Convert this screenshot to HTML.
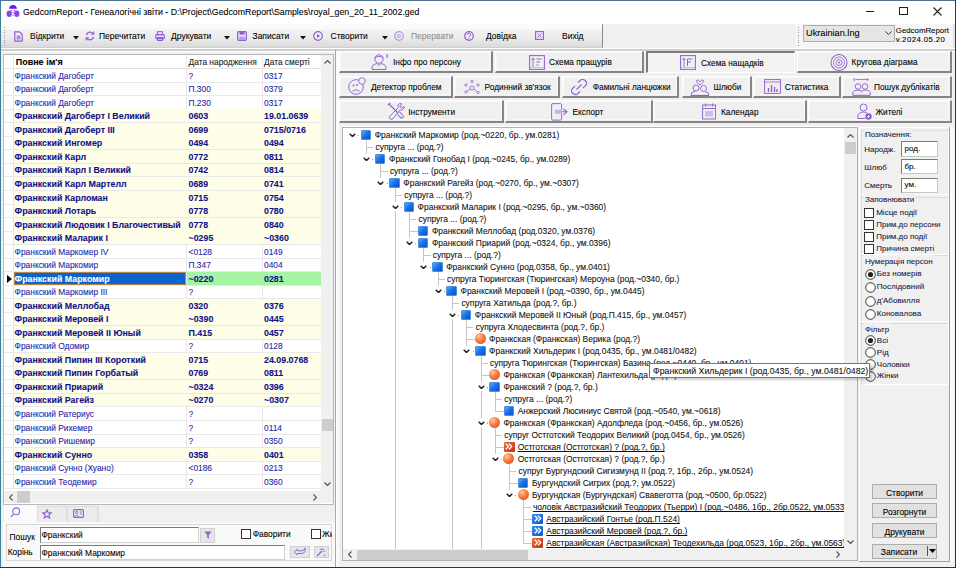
<!DOCTYPE html><html><head><meta charset="utf-8"><style>
html,body{margin:0;padding:0;} body div{-webkit-text-stroke:0.08px currentColor;} body{width:956px;height:568px;position:relative;overflow:hidden;background:#f0f0f0;font-family:"Liberation Sans", sans-serif;} div{box-sizing:border-box;}
</style></head><body>
<div style="position:absolute;left:0px;top:0px;width:956px;height:24px;background:#fff"></div>
<svg style="position:absolute;left:6px;top:5px" width="14" height="13" viewBox="0 0 14 13"><path d="M3 3.8 Q3.5 0 7 0 Q10.5 0 11 3.8 Z" fill="#6a14ee"/><ellipse cx="3.2" cy="8.8" rx="2.6" ry="3.3" fill="#8a44ec"/><ellipse cx="10.8" cy="8.8" rx="2.6" ry="3.3" fill="#8a44ec"/><path d="M4.6 5 L6.4 5 L5.5 6.6 Z M7.6 5 L9.4 5 L8.5 6.6 Z M6.2 7.3 L7.8 7.3 L7 9 Z M6.3 9.8 L7.7 9.8 L7 11.2 Z" fill="#7a30ee"/></svg>
<div style="position:absolute;left:23px;top:4.50px;height:14px;line-height:14px;font-size:8.8px;color:#000;font-weight:400;white-space:nowrap;">GedcomReport - Генеалогічні звіти - D:\Project\GedcomReport\Samples\royal_gen_20_11_2002.ged</div>
<div style="position:absolute;left:866px;top:11px;width:8px;height:1px;background:#222"></div>
<div style="position:absolute;left:899px;top:7px;width:8.5px;height:8px;border:1px solid #222"></div>
<svg style="position:absolute;left:933px;top:7px" width="9" height="9" viewBox="0 0 9 9"><path d="M0.5 0.5 L8.5 8.5 M8.5 0.5 L0.5 8.5" stroke="#222" stroke-width="1.1"/></svg>
<div style="position:absolute;left:1px;top:24px;width:602px;height:24px;background:linear-gradient(#fbfbfb 0px,#fbfbfb 5px,#f1f1f1 6px,#ededed 13px,#dadada 23px);border-right:1px solid #8c8c8c;border-bottom:1px solid #d0d0d0"></div>
<div style="position:absolute;left:4px;top:27.0px;width:1px;height:1px;background:#9a9a9a"></div>
<div style="position:absolute;left:4px;top:29.5px;width:1px;height:1px;background:#9a9a9a"></div>
<div style="position:absolute;left:4px;top:32.0px;width:1px;height:1px;background:#9a9a9a"></div>
<div style="position:absolute;left:4px;top:34.5px;width:1px;height:1px;background:#9a9a9a"></div>
<div style="position:absolute;left:4px;top:37.0px;width:1px;height:1px;background:#9a9a9a"></div>
<div style="position:absolute;left:4px;top:39.5px;width:1px;height:1px;background:#9a9a9a"></div>
<div style="position:absolute;left:4px;top:42.0px;width:1px;height:1px;background:#9a9a9a"></div>
<div style="position:absolute;left:4px;top:44.5px;width:1px;height:1px;background:#9a9a9a"></div>
<div style="position:absolute;left:603px;top:24px;width:192px;height:24px;background:#f0f0f0"></div>
<div style="position:absolute;left:795px;top:23.5px;width:159px;height:25px;background:#f6f6f6;border-bottom:1px solid #cdcdcd;border-right:1px solid #e0e0e0"></div>
<div style="position:absolute;left:798px;top:27.0px;width:1px;height:1px;background:#9a9a9a"></div>
<div style="position:absolute;left:798px;top:29.5px;width:1px;height:1px;background:#9a9a9a"></div>
<div style="position:absolute;left:798px;top:32.0px;width:1px;height:1px;background:#9a9a9a"></div>
<div style="position:absolute;left:798px;top:34.5px;width:1px;height:1px;background:#9a9a9a"></div>
<div style="position:absolute;left:798px;top:37.0px;width:1px;height:1px;background:#9a9a9a"></div>
<div style="position:absolute;left:798px;top:39.5px;width:1px;height:1px;background:#9a9a9a"></div>
<div style="position:absolute;left:798px;top:42.0px;width:1px;height:1px;background:#9a9a9a"></div>
<div style="position:absolute;left:798px;top:44.5px;width:1px;height:1px;background:#9a9a9a"></div>
<div style="position:absolute;left:1px;top:48px;width:954px;height:1px;background:#fff"></div>
<div style="position:absolute;left:1px;top:49px;width:954px;height:1.5px;background:#cfcfcf"></div>
<div style="position:absolute;left:1px;top:50.5px;width:954px;height:1px;background:#fff"></div>
<svg style="position:absolute;left:14px;top:31px" width="9" height="11" viewBox="0 0 9 11"><path d="M0.8 0.8 H5.5 L8.2 3.5 V10.2 H0.8 Z" fill="none" stroke="#8f5fd3" stroke-width="1.2"/><rect x="2.6" y="4.5" width="3.8" height="4" fill="#a58ad8"/></svg>
<div style="position:absolute;left:30px;top:29.00px;height:14px;line-height:14px;font-size:8.5px;color:#000;font-weight:400;white-space:nowrap;">Відкрити</div>
<svg style="position:absolute;left:73px;top:36px" width="6" height="4" viewBox="0 0 6 4"><path d="M0 0 H6 L3 3.5 Z" fill="#111"/></svg>
<svg style="position:absolute;left:85px;top:31px" width="10" height="10" viewBox="0 0 10 10"><path d="M1.5 4 A3.8 3.8 0 0 1 8.2 2.6 M8.5 6 A3.8 3.8 0 0 1 1.8 7.4" fill="none" stroke="#8f5fd3" stroke-width="1.3"/><path d="M8.8 0.5 V3.2 H6.1" fill="none" stroke="#8f5fd3" stroke-width="1.1"/><path d="M1.2 9.5 V6.8 H3.9" fill="none" stroke="#8f5fd3" stroke-width="1.1"/></svg>
<div style="position:absolute;left:99px;top:29.00px;height:14px;line-height:14px;font-size:8.5px;color:#000;font-weight:400;white-space:nowrap;">Перечитати</div>
<svg style="position:absolute;left:155px;top:31px" width="10" height="10" viewBox="0 0 10 10"><rect x="2.5" y="0.7" width="5" height="3" fill="none" stroke="#8f5fd3" stroke-width="1.1"/><rect x="0.7" y="3.7" width="8.6" height="4" rx="1" fill="none" stroke="#8f5fd3" stroke-width="1.2"/><rect x="2.5" y="6.5" width="5" height="3" fill="none" stroke="#8f5fd3" stroke-width="1.1"/></svg>
<div style="position:absolute;left:171px;top:29.00px;height:14px;line-height:14px;font-size:8.5px;color:#000;font-weight:400;white-space:nowrap;">Друкувати</div>
<svg style="position:absolute;left:224px;top:36px" width="6" height="4" viewBox="0 0 6 4"><path d="M0 0 H6 L3 3.5 Z" fill="#111"/></svg>
<svg style="position:absolute;left:237px;top:31px" width="10" height="10" viewBox="0 0 10 10"><rect x="0.7" y="0.7" width="8.6" height="8.6" rx="1" fill="none" stroke="#8f5fd3" stroke-width="1.3"/><rect x="2.5" y="0.7" width="5" height="3" fill="#8f5fd3"/><rect x="2.3" y="5.5" width="5.4" height="3.5" fill="#b89ae6"/></svg>
<div style="position:absolute;left:252.5px;top:29.00px;height:14px;line-height:14px;font-size:8.5px;color:#000;font-weight:400;white-space:nowrap;">Записати</div>
<svg style="position:absolute;left:300px;top:36px" width="6" height="4" viewBox="0 0 6 4"><path d="M0 0 H6 L3 3.5 Z" fill="#111"/></svg>
<svg style="position:absolute;left:313px;top:31px" width="10" height="10" viewBox="0 0 10 10"><circle cx="5" cy="5" r="4.3" fill="none" stroke="#8f5fd3" stroke-width="1.2"/><path d="M4 3 L7 5 L4 7 Z" fill="#8f5fd3"/></svg>
<div style="position:absolute;left:330.5px;top:29.00px;height:14px;line-height:14px;font-size:8.5px;color:#000;font-weight:400;white-space:nowrap;">Створити</div>
<svg style="position:absolute;left:382px;top:36px" width="6" height="4" viewBox="0 0 6 4"><path d="M0 0 H6 L3 3.5 Z" fill="#111"/></svg>
<svg style="position:absolute;left:394px;top:31px" width="10" height="10" viewBox="0 0 10 10"><circle cx="5" cy="5" r="4.3" fill="none" stroke="#b49ae0" stroke-width="1.2"/><path d="M4 3 V7 M6 3 V7" stroke="#b49ae0" stroke-width="1.1"/></svg>
<div style="position:absolute;left:411px;top:29.00px;height:14px;line-height:14px;font-size:8.5px;color:#8d8d8d;font-weight:400;white-space:nowrap;">Перервати</div>
<svg style="position:absolute;left:464px;top:31px" width="10" height="10" viewBox="0 0 10 10"><circle cx="5" cy="5" r="4.3" fill="none" stroke="#8f5fd3" stroke-width="1.2"/><path d="M3.5 3.8 A1.6 1.6 0 1 1 5.6 5.3 L5 6.2" fill="none" stroke="#8f5fd3" stroke-width="1"/><circle cx="5" cy="7.6" r="0.6" fill="#8f5fd3"/></svg>
<div style="position:absolute;left:486px;top:29.00px;height:14px;line-height:14px;font-size:8.5px;color:#000;font-weight:400;white-space:nowrap;">Довідка</div>
<svg style="position:absolute;left:535px;top:31px" width="9" height="9" viewBox="0 0 9 9"><rect x="0.6" y="0.6" width="7.8" height="7.8" fill="none" stroke="#8f5fd3" stroke-width="1.1"/><path d="M2.5 2.5 L6.5 6.5 M6.5 2.5 L2.5 6.5" stroke="#8f5fd3" stroke-width="1"/></svg>
<div style="position:absolute;left:562px;top:29.00px;height:14px;line-height:14px;font-size:8.5px;color:#000;font-weight:400;white-space:nowrap;">Вихід</div>
<div style="position:absolute;left:803px;top:24.5px;width:92px;height:17px;background:#e5e5e5;border:1px solid #adadad"></div>
<div style="position:absolute;left:806px;top:26.00px;height:14px;line-height:14px;font-size:9.2px;color:#000;font-weight:400;white-space:nowrap;">Ukrainian.lng</div>
<svg style="position:absolute;left:885px;top:31px" width="7" height="4" viewBox="0 0 7 4"><path d="M0.5 0.5 L3.5 3.5 L6.5 0.5" fill="none" stroke="#333" stroke-width="1"/></svg>
<div style="position:absolute;left:895.8px;top:26.8px;width:60px;font-size:7.85px;line-height:8.8px;color:#000;white-space:nowrap">GedcomReport<br><span style="letter-spacing:0.4px">v.2024.05.20</span></div>
<div style="position:absolute;left:1px;top:51px;width:334px;height:1px;background:#fff"></div>
<div style="position:absolute;left:335px;top:50px;width:1px;height:518px;background:#a9a9a9"></div>
<div style="position:absolute;left:3px;top:54px;width:331px;height:451px;border:1px solid #b9b9b9;background:#fff"></div>
<div style="position:absolute;left:4px;top:55px;width:317px;height:13.8px;background:#fff;border-bottom:1px solid #e2e2e2"></div>
<div style="position:absolute;left:13px;top:55px;width:1px;height:432.5px;background:#e6e6e6"></div>
<div style="position:absolute;left:186px;top:55px;width:1px;height:432.5px;background:#e8e8e8"></div>
<div style="position:absolute;left:262px;top:55px;width:1px;height:432.5px;background:#e8e8e8"></div>
<div style="position:absolute;left:15.7px;top:55.00px;height:14px;line-height:14px;font-size:9px;color:#000;font-weight:700;white-space:nowrap;">Повне ім&#x27;я</div>
<div style="position:absolute;left:188.5px;top:55.00px;height:14px;line-height:14px;font-size:8.4px;color:#222;font-weight:400;white-space:nowrap;">Дата народження</div>
<div style="position:absolute;left:264px;top:55.00px;height:14px;line-height:14px;font-size:8.4px;color:#222;font-weight:400;white-space:nowrap;">Дата смерті</div>
<div style="position:absolute;left:4px;top:81.73px;width:317px;height:1px;background:#e9e9e9"></div>
<div style="position:absolute;left:14.6px;top:68.77px;height:14px;line-height:14px;font-size:8.4px;color:#1e1ea6;font-weight:400;white-space:nowrap;">Франкский Дагоберт</div>
<div style="position:absolute;left:188.5px;top:68.77px;height:14px;line-height:14px;font-size:8.4px;color:#1e1ea6;font-weight:400;white-space:nowrap;">?</div>
<div style="position:absolute;left:264px;top:68.77px;height:14px;line-height:14px;font-size:8.4px;color:#1e1ea6;font-weight:400;white-space:nowrap;">0317</div>
<div style="position:absolute;left:4px;top:95.26px;width:317px;height:1px;background:#e9e9e9"></div>
<div style="position:absolute;left:14.6px;top:82.30px;height:14px;line-height:14px;font-size:8.4px;color:#1e1ea6;font-weight:400;white-space:nowrap;">Франкский Дагоберт</div>
<div style="position:absolute;left:188.5px;top:82.30px;height:14px;line-height:14px;font-size:8.4px;color:#1e1ea6;font-weight:400;white-space:nowrap;">П.300</div>
<div style="position:absolute;left:264px;top:82.30px;height:14px;line-height:14px;font-size:8.4px;color:#1e1ea6;font-weight:400;white-space:nowrap;">0379</div>
<div style="position:absolute;left:4px;top:108.79px;width:317px;height:1px;background:#e9e9e9"></div>
<div style="position:absolute;left:14.6px;top:95.83px;height:14px;line-height:14px;font-size:8.4px;color:#1e1ea6;font-weight:400;white-space:nowrap;">Франкский Дагоберт</div>
<div style="position:absolute;left:188.5px;top:95.83px;height:14px;line-height:14px;font-size:8.4px;color:#1e1ea6;font-weight:400;white-space:nowrap;">П.230</div>
<div style="position:absolute;left:264px;top:95.83px;height:14px;line-height:14px;font-size:8.4px;color:#1e1ea6;font-weight:400;white-space:nowrap;">0317</div>
<div style="position:absolute;left:14px;top:109.38999999999999px;width:307px;height:13.53px;background:#fdfde8"></div>
<div style="position:absolute;left:4px;top:122.32px;width:317px;height:1px;background:#e9e9e9"></div>
<div style="position:absolute;left:14.6px;top:109.35px;height:14px;line-height:14px;font-size:8.85px;color:#10108a;font-weight:700;white-space:nowrap;">Франкский Дагоберт I Великий</div>
<div style="position:absolute;left:188.5px;top:109.35px;height:14px;line-height:14px;font-size:8.85px;color:#10108a;font-weight:700;white-space:nowrap;">0603</div>
<div style="position:absolute;left:264px;top:109.35px;height:14px;line-height:14px;font-size:8.85px;color:#10108a;font-weight:700;white-space:nowrap;">19.01.0639</div>
<div style="position:absolute;left:14px;top:122.91999999999999px;width:307px;height:13.53px;background:#fdfde8"></div>
<div style="position:absolute;left:4px;top:135.85px;width:317px;height:1px;background:#e9e9e9"></div>
<div style="position:absolute;left:14.6px;top:122.88px;height:14px;line-height:14px;font-size:8.85px;color:#10108a;font-weight:700;white-space:nowrap;">Франкский Дагоберт III</div>
<div style="position:absolute;left:188.5px;top:122.88px;height:14px;line-height:14px;font-size:8.85px;color:#10108a;font-weight:700;white-space:nowrap;">0699</div>
<div style="position:absolute;left:264px;top:122.88px;height:14px;line-height:14px;font-size:8.85px;color:#10108a;font-weight:700;white-space:nowrap;">0715/0716</div>
<div style="position:absolute;left:14px;top:136.45px;width:307px;height:13.53px;background:#fdfde8"></div>
<div style="position:absolute;left:4px;top:149.38px;width:317px;height:1px;background:#e9e9e9"></div>
<div style="position:absolute;left:14.6px;top:136.41px;height:14px;line-height:14px;font-size:8.85px;color:#10108a;font-weight:700;white-space:nowrap;">Франкский Ингомер</div>
<div style="position:absolute;left:188.5px;top:136.41px;height:14px;line-height:14px;font-size:8.85px;color:#10108a;font-weight:700;white-space:nowrap;">0494</div>
<div style="position:absolute;left:264px;top:136.41px;height:14px;line-height:14px;font-size:8.85px;color:#10108a;font-weight:700;white-space:nowrap;">0494</div>
<div style="position:absolute;left:14px;top:149.98px;width:307px;height:13.53px;background:#fdfde8"></div>
<div style="position:absolute;left:4px;top:162.91px;width:317px;height:1px;background:#e9e9e9"></div>
<div style="position:absolute;left:14.6px;top:149.94px;height:14px;line-height:14px;font-size:8.85px;color:#10108a;font-weight:700;white-space:nowrap;">Франкский Карл</div>
<div style="position:absolute;left:188.5px;top:149.94px;height:14px;line-height:14px;font-size:8.85px;color:#10108a;font-weight:700;white-space:nowrap;">0772</div>
<div style="position:absolute;left:264px;top:149.94px;height:14px;line-height:14px;font-size:8.85px;color:#10108a;font-weight:700;white-space:nowrap;">0811</div>
<div style="position:absolute;left:14px;top:163.51px;width:307px;height:13.53px;background:#fdfde8"></div>
<div style="position:absolute;left:4px;top:176.44px;width:317px;height:1px;background:#e9e9e9"></div>
<div style="position:absolute;left:14.6px;top:163.47px;height:14px;line-height:14px;font-size:8.85px;color:#10108a;font-weight:700;white-space:nowrap;">Франкский Карл I Великий</div>
<div style="position:absolute;left:188.5px;top:163.47px;height:14px;line-height:14px;font-size:8.85px;color:#10108a;font-weight:700;white-space:nowrap;">0742</div>
<div style="position:absolute;left:264px;top:163.47px;height:14px;line-height:14px;font-size:8.85px;color:#10108a;font-weight:700;white-space:nowrap;">0814</div>
<div style="position:absolute;left:14px;top:177.04px;width:307px;height:13.53px;background:#fdfde8"></div>
<div style="position:absolute;left:4px;top:189.97px;width:317px;height:1px;background:#e9e9e9"></div>
<div style="position:absolute;left:14.6px;top:177.00px;height:14px;line-height:14px;font-size:8.85px;color:#10108a;font-weight:700;white-space:nowrap;">Франкский Карл Мартелл</div>
<div style="position:absolute;left:188.5px;top:177.00px;height:14px;line-height:14px;font-size:8.85px;color:#10108a;font-weight:700;white-space:nowrap;">0689</div>
<div style="position:absolute;left:264px;top:177.00px;height:14px;line-height:14px;font-size:8.85px;color:#10108a;font-weight:700;white-space:nowrap;">0741</div>
<div style="position:absolute;left:14px;top:190.57px;width:307px;height:13.53px;background:#fdfde8"></div>
<div style="position:absolute;left:4px;top:203.5px;width:317px;height:1px;background:#e9e9e9"></div>
<div style="position:absolute;left:14.6px;top:190.53px;height:14px;line-height:14px;font-size:8.85px;color:#10108a;font-weight:700;white-space:nowrap;">Франкский Карломан</div>
<div style="position:absolute;left:188.5px;top:190.53px;height:14px;line-height:14px;font-size:8.85px;color:#10108a;font-weight:700;white-space:nowrap;">0715</div>
<div style="position:absolute;left:264px;top:190.53px;height:14px;line-height:14px;font-size:8.85px;color:#10108a;font-weight:700;white-space:nowrap;">0754</div>
<div style="position:absolute;left:14px;top:204.09999999999997px;width:307px;height:13.53px;background:#fdfde8"></div>
<div style="position:absolute;left:4px;top:217.02999999999997px;width:317px;height:1px;background:#e9e9e9"></div>
<div style="position:absolute;left:14.6px;top:204.06px;height:14px;line-height:14px;font-size:8.85px;color:#10108a;font-weight:700;white-space:nowrap;">Франкский Лотарь</div>
<div style="position:absolute;left:188.5px;top:204.06px;height:14px;line-height:14px;font-size:8.85px;color:#10108a;font-weight:700;white-space:nowrap;">0778</div>
<div style="position:absolute;left:264px;top:204.06px;height:14px;line-height:14px;font-size:8.85px;color:#10108a;font-weight:700;white-space:nowrap;">0780</div>
<div style="position:absolute;left:14px;top:217.63px;width:307px;height:13.53px;background:#fdfde8"></div>
<div style="position:absolute;left:4px;top:230.56px;width:317px;height:1px;background:#e9e9e9"></div>
<div style="position:absolute;left:14.6px;top:217.59px;height:14px;line-height:14px;font-size:8.85px;color:#10108a;font-weight:700;white-space:nowrap;">Франкский Людовик I Благочестивый</div>
<div style="position:absolute;left:188.5px;top:217.59px;height:14px;line-height:14px;font-size:8.85px;color:#10108a;font-weight:700;white-space:nowrap;">0778</div>
<div style="position:absolute;left:264px;top:217.59px;height:14px;line-height:14px;font-size:8.85px;color:#10108a;font-weight:700;white-space:nowrap;">0840</div>
<div style="position:absolute;left:14px;top:231.15999999999997px;width:307px;height:13.53px;background:#fdfde8"></div>
<div style="position:absolute;left:4px;top:244.08999999999997px;width:317px;height:1px;background:#e9e9e9"></div>
<div style="position:absolute;left:14.6px;top:231.12px;height:14px;line-height:14px;font-size:8.85px;color:#10108a;font-weight:700;white-space:nowrap;">Франкский Маларик I</div>
<div style="position:absolute;left:188.5px;top:231.12px;height:14px;line-height:14px;font-size:8.85px;color:#10108a;font-weight:700;white-space:nowrap;">~0295</div>
<div style="position:absolute;left:264px;top:231.12px;height:14px;line-height:14px;font-size:8.85px;color:#10108a;font-weight:700;white-space:nowrap;">~0360</div>
<div style="position:absolute;left:4px;top:257.61999999999995px;width:317px;height:1px;background:#e9e9e9"></div>
<div style="position:absolute;left:14.6px;top:244.65px;height:14px;line-height:14px;font-size:8.4px;color:#1e1ea6;font-weight:400;white-space:nowrap;">Франкский Маркомер IV</div>
<div style="position:absolute;left:188.5px;top:244.65px;height:14px;line-height:14px;font-size:8.4px;color:#1e1ea6;font-weight:400;white-space:nowrap;">&lt;0128</div>
<div style="position:absolute;left:264px;top:244.65px;height:14px;line-height:14px;font-size:8.4px;color:#1e1ea6;font-weight:400;white-space:nowrap;">0149</div>
<div style="position:absolute;left:4px;top:271.1499999999999px;width:317px;height:1px;background:#e9e9e9"></div>
<div style="position:absolute;left:14.6px;top:258.18px;height:14px;line-height:14px;font-size:8.4px;color:#1e1ea6;font-weight:400;white-space:nowrap;">Франкский Маркомир</div>
<div style="position:absolute;left:188.5px;top:258.18px;height:14px;line-height:14px;font-size:8.4px;color:#1e1ea6;font-weight:400;white-space:nowrap;">П.347</div>
<div style="position:absolute;left:264px;top:258.18px;height:14px;line-height:14px;font-size:8.4px;color:#1e1ea6;font-weight:400;white-space:nowrap;">0404</div>
<div style="position:absolute;left:14px;top:272.25px;width:172px;height:13.03px;background:#0a64cf;border:1px solid #b08850"></div>
<div style="position:absolute;left:187px;top:272.25px;width:134px;height:13.03px;background:#a4f4a4"></div>
<svg style="position:absolute;left:7px;top:275.25px" width="5" height="8" viewBox="0 0 5 8"><path d="M0 0 L5 4 L0 8 Z" fill="#000"/></svg>
<div style="position:absolute;left:4px;top:284.67999999999995px;width:317px;height:1px;background:#e9e9e9"></div>
<div style="position:absolute;left:14.6px;top:271.71px;height:14px;line-height:14px;font-size:8.85px;color:#fff;font-weight:700;white-space:nowrap;">Франкский Маркомир</div>
<div style="position:absolute;left:188.5px;top:271.71px;height:14px;line-height:14px;font-size:8.85px;color:#10108a;font-weight:700;white-space:nowrap;">~0220</div>
<div style="position:absolute;left:264px;top:271.71px;height:14px;line-height:14px;font-size:8.85px;color:#10108a;font-weight:700;white-space:nowrap;">0281</div>
<div style="position:absolute;left:4px;top:298.2099999999999px;width:317px;height:1px;background:#e9e9e9"></div>
<div style="position:absolute;left:14.6px;top:285.24px;height:14px;line-height:14px;font-size:8.4px;color:#1e1ea6;font-weight:400;white-space:nowrap;">Франкский Маркомир III</div>
<div style="position:absolute;left:188.5px;top:285.24px;height:14px;line-height:14px;font-size:8.4px;color:#1e1ea6;font-weight:400;white-space:nowrap;">?</div>
<div style="position:absolute;left:264px;top:285.24px;height:14px;line-height:14px;font-size:8.4px;color:#1e1ea6;font-weight:400;white-space:nowrap;"></div>
<div style="position:absolute;left:14px;top:298.81px;width:307px;height:13.53px;background:#fdfde8"></div>
<div style="position:absolute;left:4px;top:311.73999999999995px;width:317px;height:1px;background:#e9e9e9"></div>
<div style="position:absolute;left:14.6px;top:298.77px;height:14px;line-height:14px;font-size:8.85px;color:#10108a;font-weight:700;white-space:nowrap;">Франкский Меллобад</div>
<div style="position:absolute;left:188.5px;top:298.77px;height:14px;line-height:14px;font-size:8.85px;color:#10108a;font-weight:700;white-space:nowrap;">0320</div>
<div style="position:absolute;left:264px;top:298.77px;height:14px;line-height:14px;font-size:8.85px;color:#10108a;font-weight:700;white-space:nowrap;">0376</div>
<div style="position:absolute;left:14px;top:312.34px;width:307px;height:13.53px;background:#fdfde8"></div>
<div style="position:absolute;left:4px;top:325.2699999999999px;width:317px;height:1px;background:#e9e9e9"></div>
<div style="position:absolute;left:14.6px;top:312.30px;height:14px;line-height:14px;font-size:8.85px;color:#10108a;font-weight:700;white-space:nowrap;">Франкский Меровей I</div>
<div style="position:absolute;left:188.5px;top:312.30px;height:14px;line-height:14px;font-size:8.85px;color:#10108a;font-weight:700;white-space:nowrap;">~0390</div>
<div style="position:absolute;left:264px;top:312.30px;height:14px;line-height:14px;font-size:8.85px;color:#10108a;font-weight:700;white-space:nowrap;">0445</div>
<div style="position:absolute;left:14px;top:325.87px;width:307px;height:13.53px;background:#fdfde8"></div>
<div style="position:absolute;left:4px;top:338.79999999999995px;width:317px;height:1px;background:#e9e9e9"></div>
<div style="position:absolute;left:14.6px;top:325.83px;height:14px;line-height:14px;font-size:8.85px;color:#10108a;font-weight:700;white-space:nowrap;">Франкский Меровей II Юный</div>
<div style="position:absolute;left:188.5px;top:325.83px;height:14px;line-height:14px;font-size:8.85px;color:#10108a;font-weight:700;white-space:nowrap;">П.415</div>
<div style="position:absolute;left:264px;top:325.83px;height:14px;line-height:14px;font-size:8.85px;color:#10108a;font-weight:700;white-space:nowrap;">0457</div>
<div style="position:absolute;left:4px;top:352.3299999999999px;width:317px;height:1px;background:#e9e9e9"></div>
<div style="position:absolute;left:14.6px;top:339.36px;height:14px;line-height:14px;font-size:8.4px;color:#1e1ea6;font-weight:400;white-space:nowrap;">Франкский Одомир</div>
<div style="position:absolute;left:188.5px;top:339.36px;height:14px;line-height:14px;font-size:8.4px;color:#1e1ea6;font-weight:400;white-space:nowrap;">?</div>
<div style="position:absolute;left:264px;top:339.36px;height:14px;line-height:14px;font-size:8.4px;color:#1e1ea6;font-weight:400;white-space:nowrap;">0128</div>
<div style="position:absolute;left:14px;top:352.93px;width:307px;height:13.53px;background:#fdfde8"></div>
<div style="position:absolute;left:4px;top:365.85999999999996px;width:317px;height:1px;background:#e9e9e9"></div>
<div style="position:absolute;left:14.6px;top:352.89px;height:14px;line-height:14px;font-size:8.85px;color:#10108a;font-weight:700;white-space:nowrap;">Франкский Пипин III Короткий</div>
<div style="position:absolute;left:188.5px;top:352.89px;height:14px;line-height:14px;font-size:8.85px;color:#10108a;font-weight:700;white-space:nowrap;">0715</div>
<div style="position:absolute;left:264px;top:352.89px;height:14px;line-height:14px;font-size:8.85px;color:#10108a;font-weight:700;white-space:nowrap;">24.09.0768</div>
<div style="position:absolute;left:14px;top:366.46px;width:307px;height:13.53px;background:#fdfde8"></div>
<div style="position:absolute;left:4px;top:379.38999999999993px;width:317px;height:1px;background:#e9e9e9"></div>
<div style="position:absolute;left:14.6px;top:366.42px;height:14px;line-height:14px;font-size:8.85px;color:#10108a;font-weight:700;white-space:nowrap;">Франкский Пипин Горбатый</div>
<div style="position:absolute;left:188.5px;top:366.42px;height:14px;line-height:14px;font-size:8.85px;color:#10108a;font-weight:700;white-space:nowrap;">0769</div>
<div style="position:absolute;left:264px;top:366.42px;height:14px;line-height:14px;font-size:8.85px;color:#10108a;font-weight:700;white-space:nowrap;">0811</div>
<div style="position:absolute;left:14px;top:379.99px;width:307px;height:13.53px;background:#fdfde8"></div>
<div style="position:absolute;left:4px;top:392.91999999999996px;width:317px;height:1px;background:#e9e9e9"></div>
<div style="position:absolute;left:14.6px;top:379.95px;height:14px;line-height:14px;font-size:8.85px;color:#10108a;font-weight:700;white-space:nowrap;">Франкский Приарий</div>
<div style="position:absolute;left:188.5px;top:379.95px;height:14px;line-height:14px;font-size:8.85px;color:#10108a;font-weight:700;white-space:nowrap;">~0324</div>
<div style="position:absolute;left:264px;top:379.95px;height:14px;line-height:14px;font-size:8.85px;color:#10108a;font-weight:700;white-space:nowrap;">0396</div>
<div style="position:absolute;left:14px;top:393.52px;width:307px;height:13.53px;background:#fdfde8"></div>
<div style="position:absolute;left:4px;top:406.44999999999993px;width:317px;height:1px;background:#e9e9e9"></div>
<div style="position:absolute;left:14.6px;top:393.48px;height:14px;line-height:14px;font-size:8.85px;color:#10108a;font-weight:700;white-space:nowrap;">Франкский Рагейз</div>
<div style="position:absolute;left:188.5px;top:393.48px;height:14px;line-height:14px;font-size:8.85px;color:#10108a;font-weight:700;white-space:nowrap;">~0270</div>
<div style="position:absolute;left:264px;top:393.48px;height:14px;line-height:14px;font-size:8.85px;color:#10108a;font-weight:700;white-space:nowrap;">~0307</div>
<div style="position:absolute;left:4px;top:419.97999999999996px;width:317px;height:1px;background:#e9e9e9"></div>
<div style="position:absolute;left:14.6px;top:407.01px;height:14px;line-height:14px;font-size:8.4px;color:#1e1ea6;font-weight:400;white-space:nowrap;">Франкский Ратериус</div>
<div style="position:absolute;left:188.5px;top:407.01px;height:14px;line-height:14px;font-size:8.4px;color:#1e1ea6;font-weight:400;white-space:nowrap;">?</div>
<div style="position:absolute;left:264px;top:407.01px;height:14px;line-height:14px;font-size:8.4px;color:#1e1ea6;font-weight:400;white-space:nowrap;"></div>
<div style="position:absolute;left:4px;top:433.50999999999993px;width:317px;height:1px;background:#e9e9e9"></div>
<div style="position:absolute;left:14.6px;top:420.54px;height:14px;line-height:14px;font-size:8.4px;color:#1e1ea6;font-weight:400;white-space:nowrap;">Франкский Рихемер</div>
<div style="position:absolute;left:188.5px;top:420.54px;height:14px;line-height:14px;font-size:8.4px;color:#1e1ea6;font-weight:400;white-space:nowrap;">?</div>
<div style="position:absolute;left:264px;top:420.54px;height:14px;line-height:14px;font-size:8.4px;color:#1e1ea6;font-weight:400;white-space:nowrap;">0114</div>
<div style="position:absolute;left:4px;top:447.03999999999996px;width:317px;height:1px;background:#e9e9e9"></div>
<div style="position:absolute;left:14.6px;top:434.07px;height:14px;line-height:14px;font-size:8.4px;color:#1e1ea6;font-weight:400;white-space:nowrap;">Франкский Ришемир</div>
<div style="position:absolute;left:188.5px;top:434.07px;height:14px;line-height:14px;font-size:8.4px;color:#1e1ea6;font-weight:400;white-space:nowrap;">?</div>
<div style="position:absolute;left:264px;top:434.07px;height:14px;line-height:14px;font-size:8.4px;color:#1e1ea6;font-weight:400;white-space:nowrap;">0350</div>
<div style="position:absolute;left:14px;top:447.64px;width:307px;height:13.53px;background:#fdfde8"></div>
<div style="position:absolute;left:4px;top:460.56999999999994px;width:317px;height:1px;background:#e9e9e9"></div>
<div style="position:absolute;left:14.6px;top:447.60px;height:14px;line-height:14px;font-size:8.85px;color:#10108a;font-weight:700;white-space:nowrap;">Франкский Сунно</div>
<div style="position:absolute;left:188.5px;top:447.60px;height:14px;line-height:14px;font-size:8.85px;color:#10108a;font-weight:700;white-space:nowrap;">0358</div>
<div style="position:absolute;left:264px;top:447.60px;height:14px;line-height:14px;font-size:8.85px;color:#10108a;font-weight:700;white-space:nowrap;">0401</div>
<div style="position:absolute;left:4px;top:474.09999999999997px;width:317px;height:1px;background:#e9e9e9"></div>
<div style="position:absolute;left:14.6px;top:461.13px;height:14px;line-height:14px;font-size:8.4px;color:#1e1ea6;font-weight:400;white-space:nowrap;">Франкский Сунно (Хуано)</div>
<div style="position:absolute;left:188.5px;top:461.13px;height:14px;line-height:14px;font-size:8.4px;color:#1e1ea6;font-weight:400;white-space:nowrap;">&lt;0186</div>
<div style="position:absolute;left:264px;top:461.13px;height:14px;line-height:14px;font-size:8.4px;color:#1e1ea6;font-weight:400;white-space:nowrap;">0213</div>
<div style="position:absolute;left:4px;top:487.62999999999994px;width:317px;height:1px;background:#e9e9e9"></div>
<div style="position:absolute;left:14.6px;top:474.66px;height:14px;line-height:14px;font-size:8.4px;color:#1e1ea6;font-weight:400;white-space:nowrap;">Франкский Теодемир</div>
<div style="position:absolute;left:188.5px;top:474.66px;height:14px;line-height:14px;font-size:8.4px;color:#1e1ea6;font-weight:400;white-space:nowrap;">?</div>
<div style="position:absolute;left:264px;top:474.66px;height:14px;line-height:14px;font-size:8.4px;color:#1e1ea6;font-weight:400;white-space:nowrap;">0360</div>
<div style="position:absolute;left:321px;top:55px;width:12px;height:435.6px;background:#f0f0f0"></div>
<svg style="position:absolute;left:324px;top:60px" width="7" height="4" viewBox="0 0 7 4"><path d="M0.5 3.5 L3.5 0.5 L6.5 3.5" fill="none" stroke="#555" stroke-width="1.2"/></svg>
<svg style="position:absolute;left:324px;top:482px" width="7" height="4" viewBox="0 0 7 4"><path d="M0.5 0.5 L3.5 3.5 L6.5 0.5" fill="none" stroke="#555" stroke-width="1.2"/></svg>
<div style="position:absolute;left:322px;top:418.5px;width:11px;height:12.5px;background:#cdcdcd"></div>
<div style="position:absolute;left:4px;top:490.6px;width:329px;height:12.6px;background:#f0f0f0"></div>
<svg style="position:absolute;left:9px;top:494px" width="4" height="7" viewBox="0 0 4 7"><path d="M3.5 0.5 L0.5 3.5 L3.5 6.5" fill="none" stroke="#555" stroke-width="1.2"/></svg>
<svg style="position:absolute;left:313px;top:494px" width="4" height="7" viewBox="0 0 4 7"><path d="M0.5 0.5 L3.5 3.5 L0.5 6.5" fill="none" stroke="#555" stroke-width="1.2"/></svg>
<div style="position:absolute;left:17.3px;top:491px;width:12.4px;height:12px;background:#cdcdcd"></div>
<div style="position:absolute;left:36.8px;top:505.5px;width:30.5px;height:16px;background:#ececec;border:1px solid #dedede;border-bottom:none"></div>
<div style="position:absolute;left:67.3px;top:505.5px;width:30.5px;height:16px;background:#ececec;border:1px solid #dedede;border-bottom:none"></div>
<div style="position:absolute;left:97.8px;top:505.5px;width:236px;height:16px;border-left:1px solid #dedede"></div>
<div style="position:absolute;left:4px;top:505px;width:32.8px;height:17px;background:#fbfbfb"></div>
<svg style="position:absolute;left:10px;top:507px" width="11" height="11" viewBox="0 0 11 11"><circle cx="6.2" cy="4.3" r="3.4" fill="none" stroke="#8f5fd3" stroke-width="1.1"/><path d="M3.8 6.8 L0.8 9.8" stroke="#8f5fd3" stroke-width="1.2"/></svg>
<svg style="position:absolute;left:42px;top:509px" width="10" height="10" viewBox="0 0 10 10"><path d="M5 0.8 L6.2 3.7 L9.3 3.8 L6.9 5.8 L7.7 8.9 L5 7.2 L2.3 8.9 L3.1 5.8 L0.7 3.8 L3.8 3.7 Z" fill="none" stroke="#8f5fd3" stroke-width="1.1"/></svg>
<svg style="position:absolute;left:73px;top:509px" width="11" height="9" viewBox="0 0 11 9"><rect x="0.6" y="0.6" width="9.8" height="7.8" rx="1" fill="none" stroke="#8f5fd3" stroke-width="1.1"/><circle cx="3.7" cy="3.4" r="1.3" fill="none" stroke="#8f5fd3" stroke-width="0.9"/><path d="M1.6 7.4 Q3.7 4.8 5.8 7.4" fill="none" stroke="#8f5fd3" stroke-width="0.9"/><path d="M7 3 H9 M7 5 H9" stroke="#8f5fd3" stroke-width="0.9"/></svg>
<div style="position:absolute;left:3px;top:521.5px;width:332px;height:45px;background:#f9f9f9"></div>
<div style="position:absolute;left:6px;top:523.6px;width:326px;height:37px;border:1px solid #d8d8d8"></div>
<div style="position:absolute;left:9.6px;top:529.50px;height:14px;line-height:14px;font-size:8.4px;color:#000;font-weight:400;white-space:nowrap;">Пошук</div>
<div style="position:absolute;left:7.7px;top:544.50px;height:14px;line-height:14px;font-size:8.4px;color:#000;font-weight:400;white-space:nowrap;">Корінь</div>
<div style="position:absolute;left:39.5px;top:527.2px;width:159px;height:15.5px;background:#fff;border:1px solid #7a7a7a;border-right-color:#d0d0d0;border-bottom-color:#d0d0d0"></div>
<div style="position:absolute;left:41.5px;top:528.00px;height:14px;line-height:14px;font-size:8.4px;color:#000;font-weight:400;white-space:nowrap;">Франкский</div>
<div style="position:absolute;left:200px;top:528px;width:15px;height:14.7px;background:#e6e6e6;border:1px solid #d0d0d0"></div>
<svg style="position:absolute;left:203.5px;top:531px" width="8" height="8" viewBox="0 0 8 8"><path d="M0.3 0.5 H7.7 L4.8 4 V7.8 L3.2 6.8 V4 Z" fill="#8f5fd3"/></svg>
<div style="position:absolute;left:39.5px;top:545px;width:245.3px;height:15px;background:#fff;border:1px solid #7a7a7a;border-right-color:#d0d0d0;border-bottom-color:#d0d0d0"></div>
<div style="position:absolute;left:41.5px;top:545.50px;height:14px;line-height:14px;font-size:8.4px;color:#000;font-weight:400;white-space:nowrap;">Франкский Маркомир</div>
<div style="position:absolute;left:241px;top:529px;width:10px;height:9.6px;background:#fff;border:1px solid #333"></div>
<div style="position:absolute;left:252.7px;top:527.00px;height:14px;line-height:14px;font-size:8.4px;color:#000;font-weight:400;white-space:nowrap;">Фаворити</div>
<div style="position:absolute;left:310.6px;top:529px;width:10px;height:9.6px;background:#fff;border:1px solid #333"></div>
<div style="position:absolute;left:322px;top:527px;width:10px;height:14px;overflow:hidden">
<div style="position:absolute;left:0px;top:0.00px;height:14px;line-height:14px;font-size:8.4px;color:#000;font-weight:400;white-space:nowrap;">Жителі</div>
</div>
<div style="position:absolute;left:290px;top:545.7px;width:19.7px;height:12.3px;background:#e6e6e6;border:1px solid #d0d0d0"></div>
<svg style="position:absolute;left:293px;top:547px" width="14" height="9" viewBox="0 0 14 9"><path d="M1 5 L4 2 V3.8 H9 Q12 3.5 12 1 Q13 6 9 6.5 H4 V8 Z" fill="none" stroke="#8f5fd3" stroke-width="0.9"/></svg>
<div style="position:absolute;left:314px;top:545.7px;width:14.7px;height:12.3px;background:#e6e6e6;border:1px solid #d0d0d0"></div>
<svg style="position:absolute;left:316px;top:547px" width="10" height="10" viewBox="0 0 10 10"><path d="M1 9 L6 4" stroke="#8f5fd3" stroke-width="1.2"/><path d="M6 1 V3 M8 2 L7 3.2 M9 4.5 H7.5 M4 2 L5 3.2" stroke="#8f5fd3" stroke-width="0.9"/><circle cx="8.5" cy="8.5" r="0.7" fill="#8f5fd3"/></svg>
<div style="position:absolute;left:336px;top:51px;width:2.5px;height:517px;background:#fbfbfb"></div>
<div style="position:absolute;left:339px;top:51px;width:154px;height:22px;background:#f0f0f0;border-top:1px solid #fff;border-left:1px solid #fff;border-bottom:2px solid #858585;border-right:2px solid #858585"></div>
<div style="position:absolute;left:340px;top:52px;width:150.4px;height:18.3px;border:1px solid #f7f7f7"></div>
<svg style="position:absolute;left:371px;top:53px" width="17" height="17" viewBox="0 0 17 17"><circle cx="8" cy="6" r="4.2" fill="none" stroke="#8f5fd3" stroke-width="0.94"/><path d="M4 5 Q8 1.5 12 5" fill="none" stroke="#8f5fd3" stroke-width="0.94"/><path d="M1 16.5 V14 Q1.5 11 6 10.5 L8 12.5 L10 10.5 Q14.5 11 15 14 V16.5 Z" fill="none" stroke="#8f5fd3" stroke-width="0.94"/><path d="M16 1 V5" stroke="#8f5fd3" stroke-width="1.10"/></svg>
<div style="position:absolute;left:393px;top:55.30px;height:14px;line-height:14px;font-size:8.3px;color:#000;font-weight:400;white-space:nowrap;">Інфо про персону</div>
<div style="position:absolute;left:495.4px;top:51px;width:148.80000000000007px;height:22px;background:#f0f0f0;border-top:1px solid #fff;border-left:1px solid #fff;border-bottom:2px solid #858585;border-right:2px solid #858585"></div>
<div style="position:absolute;left:496.4px;top:52px;width:145.20000000000007px;height:18.3px;border:1px solid #f7f7f7"></div>
<svg style="position:absolute;left:528.5px;top:54.5px" width="16" height="15" viewBox="0 0 16 15"><rect x="0.6" y="0.6" width="14.8" height="13.8" fill="none" stroke="#8f5fd3" stroke-width="1.02"/><path d="M4 3 V12 M2.3 5 L4 3 L5.7 5" fill="none" stroke="#8f5fd3" stroke-width="0.85"/><path d="M7.5 4 H12.5 M7.5 7 H11 M7.5 10 H9.5" stroke="#8f5fd3" stroke-width="1.02"/><path d="M1 12.5 H15" stroke="#c8b0ee" stroke-width="0.85"/></svg>
<div style="position:absolute;left:549px;top:55.30px;height:14px;line-height:14px;font-size:8.3px;color:#000;font-weight:400;white-space:nowrap;">Схема пращурів</div>
<div style="position:absolute;left:646.4px;top:51px;width:148.60000000000002px;height:22px;background:#f2f2f2;border-top:2px solid #7d7d7d;border-left:2px solid #7d7d7d;border-bottom:1px solid #fff;border-right:1px solid #fff"></div>
<svg style="position:absolute;left:679.7px;top:54.5px" width="16" height="15" viewBox="0 0 16 15"><rect x="0.6" y="0.6" width="14.8" height="13.8" fill="none" stroke="#8f5fd3" stroke-width="1.02"/><path d="M4 3 V12 M2.3 5 L4 3 L5.7 5" fill="none" stroke="#8f5fd3" stroke-width="0.85"/><path d="M7.5 4 H12.5 M7.5 7 H11 M7.5 4 V11" stroke="#8f5fd3" stroke-width="1.02"/><path d="M1 12.5 H15" stroke="#c8b0ee" stroke-width="0.85"/></svg>
<div style="position:absolute;left:701px;top:55.50px;height:14px;line-height:14px;font-size:8.3px;color:#000;font-weight:400;white-space:nowrap;">Схема нащадків</div>
<div style="position:absolute;left:797px;top:51px;width:155px;height:22px;background:#f0f0f0;border-top:1px solid #fff;border-left:1px solid #fff;border-bottom:2px solid #858585;border-right:2px solid #858585"></div>
<div style="position:absolute;left:798px;top:52px;width:151.4px;height:18.3px;border:1px solid #f7f7f7"></div>
<svg style="position:absolute;left:830px;top:53.5px" width="18" height="17" viewBox="0 0 18 17"><circle cx="9" cy="8.5" r="8" fill="none" stroke="#8f5fd3" stroke-width="1.02"/><circle cx="9" cy="8.5" r="5.5" fill="none" stroke="#8f5fd3" stroke-width="0.85"/><circle cx="9" cy="8.5" r="3" fill="none" stroke="#8f5fd3" stroke-width="0.85"/><circle cx="9" cy="8.5" r="1" fill="#8f5fd3"/></svg>
<div style="position:absolute;left:851.6px;top:55.30px;height:14px;line-height:14px;font-size:8.3px;color:#000;font-weight:400;white-space:nowrap;">Кругова діаграма</div>
<div style="position:absolute;left:339px;top:75.5px;width:113.5px;height:22.5px;background:#f0f0f0;border-top:1px solid #fff;border-left:1px solid #fff;border-bottom:2px solid #858585;border-right:2px solid #858585"></div>
<div style="position:absolute;left:340px;top:76.5px;width:109.9px;height:18.8px;border:1px solid #f7f7f7"></div>
<svg style="position:absolute;left:348px;top:77px" width="19" height="18" viewBox="0 0 19 18"><circle cx="8" cy="10" r="7.3" fill="none" stroke="#8f5fd3" stroke-width="0.94"/><circle cx="14" cy="4" r="3.3" fill="#f0f0f0" stroke="#8f5fd3" stroke-width="0.85"/><path d="M4.5 14 Q8 11.5 11.5 14" fill="none" stroke="#8f5fd3" stroke-width="0.85"/><circle cx="5.5" cy="8.5" r="0.9" fill="#8f5fd3"/><circle cx="9" cy="8" r="0.9" fill="#8f5fd3"/></svg>
<div style="position:absolute;left:371px;top:80.20px;height:14px;line-height:14px;font-size:8.3px;color:#000;font-weight:400;white-space:nowrap;">Детектор проблем</div>
<div style="position:absolute;left:453.6px;top:75.5px;width:106.79999999999995px;height:22.5px;background:#f0f0f0;border-top:1px solid #fff;border-left:1px solid #fff;border-bottom:2px solid #858585;border-right:2px solid #858585"></div>
<div style="position:absolute;left:454.6px;top:76.5px;width:103.19999999999996px;height:18.8px;border:1px solid #f7f7f7"></div>
<svg style="position:absolute;left:463.8px;top:79.5px" width="16" height="15" viewBox="0 0 16 15"><circle cx="8" cy="8" r="2.2" fill="none" stroke="#8f5fd3" stroke-width="0.85"/><circle cx="8" cy="1.5" r="1.2" fill="none" stroke="#8f5fd3" stroke-width="0.77"/><circle cx="2" cy="5" r="1.2" fill="none" stroke="#8f5fd3" stroke-width="0.77"/><circle cx="14" cy="5" r="1.2" fill="none" stroke="#8f5fd3" stroke-width="0.77"/><circle cx="2" cy="12" r="1.2" fill="none" stroke="#8f5fd3" stroke-width="0.77"/><circle cx="14" cy="12.5" r="1.2" fill="none" stroke="#8f5fd3" stroke-width="0.77"/><path d="M3 11 L6.3 9.2 M9.8 9.2 L13 11.6" stroke="#8f5fd3" stroke-width="0.68"/></svg>
<div style="position:absolute;left:484.6px;top:80.20px;height:14px;line-height:14px;font-size:8.3px;color:#000;font-weight:400;white-space:nowrap;">Родинний зв&#x27;язок</div>
<div style="position:absolute;left:561.5px;top:75.5px;width:117.79999999999995px;height:22.5px;background:#f0f0f0;border-top:1px solid #fff;border-left:1px solid #fff;border-bottom:2px solid #858585;border-right:2px solid #858585"></div>
<div style="position:absolute;left:562.5px;top:76.5px;width:114.19999999999996px;height:18.8px;border:1px solid #f7f7f7"></div>
<svg style="position:absolute;left:571px;top:79px" width="17" height="17" viewBox="0 0 17 17"><path d="M7 3.5 L10 0.8 Q12 -0.5 14.5 2 Q16.5 4 15 6 L12 9" fill="none" stroke="#8f5fd3" stroke-width="1.10"/><path d="M9 12.5 L6 15.2 Q4 16.5 1.5 14 Q-0.5 12 1 10 L4 7" fill="none" stroke="#8f5fd3" stroke-width="1.10"/><path d="M5.5 10.5 L10.5 5.5" stroke="#8f5fd3" stroke-width="1.10"/></svg>
<div style="position:absolute;left:592.8px;top:80.20px;height:14px;line-height:14px;font-size:8.3px;color:#000;font-weight:400;white-space:nowrap;">Фамильні ланцюжки</div>
<div style="position:absolute;left:681.8px;top:75.5px;width:70.20000000000005px;height:22.5px;background:#f0f0f0;border-top:1px solid #fff;border-left:1px solid #fff;border-bottom:2px solid #858585;border-right:2px solid #858585"></div>
<div style="position:absolute;left:682.8px;top:76.5px;width:66.60000000000005px;height:18.8px;border:1px solid #f7f7f7"></div>
<svg style="position:absolute;left:690px;top:77.5px" width="20" height="18" viewBox="0 0 20 18"><path d="M10 4 Q8 0.5 6.5 2.5 Q5.5 4 10 7 Q14.5 4 13.5 2.5 Q12 0.5 10 4" fill="none" stroke="#8f5fd3" stroke-width="0.85"/><circle cx="6" cy="10" r="3" fill="none" stroke="#8f5fd3" stroke-width="0.94"/><circle cx="13.5" cy="10.5" r="3" fill="none" stroke="#8f5fd3" stroke-width="0.94"/><path d="M0.8 17 Q1 13.5 5 13.5 M19 17 Q19 14 15.5 14" fill="none" stroke="#8f5fd3" stroke-width="0.94"/><path d="M0.8 17.5 H19" stroke="#8f5fd3" stroke-width="1.27"/></svg>
<div style="position:absolute;left:713.4px;top:80.20px;height:14px;line-height:14px;font-size:8.3px;color:#000;font-weight:400;white-space:nowrap;">Шлюби</div>
<div style="position:absolute;left:753.3px;top:75.5px;width:87.30000000000007px;height:22.5px;background:#f0f0f0;border-top:1px solid #fff;border-left:1px solid #fff;border-bottom:2px solid #858585;border-right:2px solid #858585"></div>
<div style="position:absolute;left:754.3px;top:76.5px;width:83.70000000000007px;height:18.8px;border:1px solid #f7f7f7"></div>
<svg style="position:absolute;left:764px;top:79px" width="17" height="15" viewBox="0 0 17 15"><rect x="0.6" y="0.6" width="15.8" height="13.8" fill="none" stroke="#8f5fd3" stroke-width="0.94"/><path d="M1 3 H16" stroke="#8f5fd3" stroke-width="0.77"/><path d="M4.5 13 V9 M7.5 13 V6 M10.5 13 V8 M13 13 V10" stroke="#8f5fd3" stroke-width="1.36"/></svg>
<div style="position:absolute;left:784.8px;top:80.20px;height:14px;line-height:14px;font-size:8.3px;color:#000;font-weight:400;white-space:nowrap;">Статистика</div>
<div style="position:absolute;left:842.3px;top:75.5px;width:109.70000000000005px;height:22.5px;background:#f0f0f0;border-top:1px solid #fff;border-left:1px solid #fff;border-bottom:2px solid #858585;border-right:2px solid #858585"></div>
<div style="position:absolute;left:843.3px;top:76.5px;width:106.10000000000005px;height:18.8px;border:1px solid #f7f7f7"></div>
<svg style="position:absolute;left:851.6px;top:77.5px" width="19" height="18" viewBox="0 0 19 18"><path d="M3 1.5 H16 M14.5 0 L16.5 1.5 L14.5 3 M3 0 L1 1.5 L3 3" fill="none" stroke="#8f5fd3" stroke-width="0.77"/><circle cx="6" cy="8.5" r="2.8" fill="none" stroke="#8f5fd3" stroke-width="0.94"/><circle cx="13" cy="8.5" r="2.8" fill="none" stroke="#8f5fd3" stroke-width="0.94"/><path d="M0.8 17 V14.5 Q1.5 12 6 12 Q9.5 12 10 14.5 M9 14 Q10 12 13 12 Q18 12 18.3 14.5 V17" fill="none" stroke="#8f5fd3" stroke-width="0.94"/><path d="M0.8 17.3 H18.3" stroke="#8f5fd3" stroke-width="1.10"/></svg>
<div style="position:absolute;left:874px;top:80.20px;height:14px;line-height:14px;font-size:8.3px;color:#000;font-weight:400;white-space:nowrap;">Пошук дублікатів</div>
<div style="position:absolute;left:339px;top:100.3px;width:165.39999999999998px;height:22.700000000000003px;background:#f0f0f0;border-top:1px solid #fff;border-left:1px solid #fff;border-bottom:2px solid #858585;border-right:2px solid #858585"></div>
<div style="position:absolute;left:340px;top:101.3px;width:161.79999999999998px;height:19.000000000000004px;border:1px solid #f7f7f7"></div>
<svg style="position:absolute;left:386.6px;top:102px" width="18" height="18" viewBox="0 0 18 18"><path d="M2 2 L11 11 M1 3 L3 1" stroke="#8f5fd3" stroke-width="1.19"/><path d="M10.5 12.5 L13.5 15.5 Q15 16.5 16 15.5 Q17 14.5 15.5 13 L12.5 10" fill="none" stroke="#8f5fd3" stroke-width="1.02"/><path d="M15 2 Q12 0.5 11 3 Q10.5 4.5 11.5 5.5 L3 14 Q1.5 15.5 3 17 Q4.5 18 6 16.5 L13 8 Q15 8.5 16.5 7 Q17.5 5.5 17 4 L15 6 L13.2 5 L13 3.5 Z" fill="none" stroke="#8f5fd3" stroke-width="0.94"/></svg>
<div style="position:absolute;left:408.3px;top:104.60px;height:14px;line-height:14px;font-size:8.3px;color:#000;font-weight:400;white-space:nowrap;">Інструменти</div>
<div style="position:absolute;left:505px;top:100.3px;width:147.5px;height:22.700000000000003px;background:#f0f0f0;border-top:1px solid #fff;border-left:1px solid #fff;border-bottom:2px solid #858585;border-right:2px solid #858585"></div>
<div style="position:absolute;left:506px;top:101.3px;width:143.9px;height:19.000000000000004px;border:1px solid #f7f7f7"></div>
<svg style="position:absolute;left:550.8px;top:102.5px" width="17" height="18" viewBox="0 0 17 18"><rect x="0.6" y="0.6" width="10" height="16.5" rx="1.2" fill="none" stroke="#8f5fd3" stroke-width="0.94"/><path d="M5 8.8 H15.5 M12.5 5.8 L16 8.8 L12.5 11.8" fill="none" stroke="#8f5fd3" stroke-width="1.10"/><rect x="4" y="6.8" width="7" height="4" fill="#c7b1ee"/></svg>
<div style="position:absolute;left:572.5px;top:104.60px;height:14px;line-height:14px;font-size:8.3px;color:#000;font-weight:400;white-space:nowrap;">Експорт</div>
<div style="position:absolute;left:653.2px;top:100.3px;width:154.0px;height:22.700000000000003px;background:#f0f0f0;border-top:1px solid #fff;border-left:1px solid #fff;border-bottom:2px solid #858585;border-right:2px solid #858585"></div>
<div style="position:absolute;left:654.2px;top:101.3px;width:150.4px;height:19.000000000000004px;border:1px solid #f7f7f7"></div>
<svg style="position:absolute;left:702px;top:102.5px" width="14" height="17" viewBox="0 0 14 17"><rect x="0.6" y="2" width="13" height="14" fill="none" stroke="#8f5fd3" stroke-width="0.94"/><path d="M1 5.5 H13.5 M3.5 0.5 V3.5 M10.5 0.5 V3.5" stroke="#8f5fd3" stroke-width="0.94"/><rect x="3" y="8" width="8" height="5.5" fill="#cdbcec"/></svg>
<div style="position:absolute;left:721px;top:104.60px;height:14px;line-height:14px;font-size:8.3px;color:#000;font-weight:400;white-space:nowrap;">Календар</div>
<div style="position:absolute;left:807.8px;top:100.3px;width:144.20000000000005px;height:22.700000000000003px;background:#f0f0f0;border-top:1px solid #fff;border-left:1px solid #fff;border-bottom:2px solid #858585;border-right:2px solid #858585"></div>
<div style="position:absolute;left:808.8px;top:101.3px;width:140.60000000000005px;height:19.000000000000004px;border:1px solid #f7f7f7"></div>
<svg style="position:absolute;left:856.5px;top:103px" width="15" height="17" viewBox="0 0 15 17"><circle cx="6.5" cy="4.5" r="3.5" fill="none" stroke="#8f5fd3" stroke-width="0.94"/><path d="M0.8 15.5 V13 Q1.5 9 6.5 9 Q9 9 10.5 10.5" fill="none" stroke="#8f5fd3" stroke-width="0.94"/><path d="M0.8 15.5 H8" stroke="#8f5fd3" stroke-width="1.02"/><circle cx="11.5" cy="13.5" r="3.2" fill="#8f5fd3"/><path d="M10 13.5 H13 M11.5 12 V15" stroke="#fff" stroke-width="0.68"/></svg>
<div style="position:absolute;left:875.4px;top:104.60px;height:14px;line-height:14px;font-size:8.3px;color:#000;font-weight:400;white-space:nowrap;">Жителі</div>
<div style="position:absolute;left:341.5px;top:126.4px;width:517px;height:1px;background:#fff"></div>
<div style="position:absolute;left:342px;top:127.3px;width:515.5px;height:434px;border:1px solid #b0b0b0;background:#fff"></div>
<div style="position:absolute;left:844px;top:128.3px;width:12.7px;height:421px;background:#f0f0f0"></div>
<svg style="position:absolute;left:846.5px;top:133.5px" width="7" height="4" viewBox="0 0 7 4"><path d="M0.5 3.5 L3.5 0.5 L6.5 3.5" fill="none" stroke="#555" stroke-width="1.2"/></svg>
<svg style="position:absolute;left:846.5px;top:539.5px" width="7" height="4" viewBox="0 0 7 4"><path d="M0.5 0.5 L3.5 3.5 L6.5 0.5" fill="none" stroke="#555" stroke-width="1.2"/></svg>
<div style="position:absolute;left:844.5px;top:141.8px;width:11.5px;height:12.7px;background:#cdcdcd"></div>
<div style="position:absolute;left:343px;top:549.2px;width:514px;height:11.3px;background:#f0f0f0"></div>
<svg style="position:absolute;left:348px;top:551px" width="4" height="7" viewBox="0 0 4 7"><path d="M3.5 0.5 L0.5 3.5 L3.5 6.5" fill="none" stroke="#555" stroke-width="1.2"/></svg>
<svg style="position:absolute;left:835.5px;top:551px" width="4" height="7" viewBox="0 0 4 7"><path d="M0.5 0.5 L3.5 3.5 L0.5 6.5" fill="none" stroke="#555" stroke-width="1.2"/></svg>
<div style="position:absolute;left:356.5px;top:549.7px;width:171px;height:10.5px;background:#cdcdcd"></div>
<div style="position:absolute;left:343px;top:128.3px;width:501px;height:420.9px;overflow:hidden">
<div style="position:absolute;left:23.100000000000023px;top:11.699999999999989px;width:1px;height:15px;background:#c6c6c6"></div>
<div style="position:absolute;left:37.400000000000034px;top:35.69999999999999px;width:1px;height:15px;background:#c6c6c6"></div>
<div style="position:absolute;left:51.700000000000045px;top:59.69999999999999px;width:1px;height:372px;background:#c6c6c6"></div>
<div style="position:absolute;left:66.0px;top:83.69999999999999px;width:1px;height:27px;background:#c6c6c6"></div>
<div style="position:absolute;left:80.30000000000001px;top:119.69999999999999px;width:1px;height:15px;background:#c6c6c6"></div>
<div style="position:absolute;left:94.60000000000002px;top:143.7px;width:1px;height:15px;background:#c6c6c6"></div>
<div style="position:absolute;left:108.90000000000003px;top:167.7px;width:1px;height:264px;background:#c6c6c6"></div>
<div style="position:absolute;left:123.20000000000005px;top:191.7px;width:1px;height:27px;background:#c6c6c6"></div>
<div style="position:absolute;left:137.5px;top:227.7px;width:1px;height:204px;background:#c6c6c6"></div>
<div style="position:absolute;left:151.80000000000007px;top:263.7px;width:1px;height:19px;background:#c6c6c6"></div>
<div style="position:absolute;left:151.80000000000007px;top:299.7px;width:1px;height:27px;background:#c6c6c6"></div>
<div style="position:absolute;left:166.10000000000002px;top:335.7px;width:1px;height:27px;background:#c6c6c6"></div>
<div style="position:absolute;left:180.4000000000001px;top:371.7px;width:1px;height:43px;background:#c6c6c6"></div>
<div style="position:absolute;left:4.800000000000011px;top:2.1999999999999886px;width:9px;height:9px;background:#fff"></div>
<svg style="position:absolute;left:5.80px;top:4.40px" width="7" height="4.5"><path d="M0.7 0.7 L3.5 3.5 L6.3 0.7" fill="none" stroke="#222" stroke-width="1.5"/></svg>
<div style="position:absolute;left:15.100000000000023px;top:6.699999999999989px;width:1px;height:1px;background:#999"></div>
<div style="position:absolute;left:17.600000000000023px;top:1.6999999999999886px;width:10.5px;height:10px;background:linear-gradient(135deg,#5aa8ff 0%,#1a74e8 45%,#0b52c4 100%);border:1px solid #4b8fe0;border-radius:1px"></div>
<div style="position:absolute;left:31.70px;top:-0.00px;height:14px;line-height:14px;font-size:8.45px;color:#111;white-space:nowrap;">Франкский Маркомир (род.~0220, бр., ум.0281)</div>
<div style="position:absolute;left:23.100000000000023px;top:18.69999999999999px;width:7.300000000000011px;height:1px;background:#c6c6c6"></div>
<div style="position:absolute;left:32.60px;top:12.00px;height:14px;line-height:14px;font-size:8.45px;color:#111;white-space:nowrap;">супруга ... (род.?)</div>
<div style="position:absolute;left:19.100000000000023px;top:26.19999999999999px;width:9px;height:9px;background:#fff"></div>
<svg style="position:absolute;left:20.10px;top:28.40px" width="7" height="4.5"><path d="M0.7 0.7 L3.5 3.5 L6.3 0.7" fill="none" stroke="#222" stroke-width="1.5"/></svg>
<div style="position:absolute;left:29.400000000000034px;top:30.69999999999999px;width:1px;height:1px;background:#999"></div>
<div style="position:absolute;left:31.900000000000034px;top:25.69999999999999px;width:10.5px;height:10px;background:linear-gradient(135deg,#5aa8ff 0%,#1a74e8 45%,#0b52c4 100%);border:1px solid #4b8fe0;border-radius:1px"></div>
<div style="position:absolute;left:46.00px;top:24.00px;height:14px;line-height:14px;font-size:8.45px;color:#111;white-space:nowrap;">Франкский Гонобад I (род.~0245, бр., ум.0289)</div>
<div style="position:absolute;left:37.400000000000034px;top:42.69999999999999px;width:7.300000000000011px;height:1px;background:#c6c6c6"></div>
<div style="position:absolute;left:46.90px;top:36.00px;height:14px;line-height:14px;font-size:8.45px;color:#111;white-space:nowrap;">супруга ... (род.?)</div>
<div style="position:absolute;left:33.400000000000034px;top:50.19999999999999px;width:9px;height:9px;background:#fff"></div>
<svg style="position:absolute;left:34.40px;top:52.40px" width="7" height="4.5"><path d="M0.7 0.7 L3.5 3.5 L6.3 0.7" fill="none" stroke="#222" stroke-width="1.5"/></svg>
<div style="position:absolute;left:43.700000000000045px;top:54.69999999999999px;width:1px;height:1px;background:#999"></div>
<div style="position:absolute;left:46.200000000000045px;top:49.69999999999999px;width:10.5px;height:10px;background:linear-gradient(135deg,#5aa8ff 0%,#1a74e8 45%,#0b52c4 100%);border:1px solid #4b8fe0;border-radius:1px"></div>
<div style="position:absolute;left:60.30px;top:48.00px;height:14px;line-height:14px;font-size:8.45px;color:#111;white-space:nowrap;">Франкский Рагейз (род.~0270, бр., ум.~0307)</div>
<div style="position:absolute;left:51.700000000000045px;top:66.69999999999999px;width:7.2999999999999545px;height:1px;background:#c6c6c6"></div>
<div style="position:absolute;left:61.20px;top:60.00px;height:14px;line-height:14px;font-size:8.45px;color:#111;white-space:nowrap;">супруга ... (род.?)</div>
<div style="position:absolute;left:47.700000000000045px;top:74.19999999999999px;width:9px;height:9px;background:#fff"></div>
<svg style="position:absolute;left:48.70px;top:76.40px" width="7" height="4.5"><path d="M0.7 0.7 L3.5 3.5 L6.3 0.7" fill="none" stroke="#222" stroke-width="1.5"/></svg>
<div style="position:absolute;left:58.0px;top:78.69999999999999px;width:1px;height:1px;background:#999"></div>
<div style="position:absolute;left:60.5px;top:73.69999999999999px;width:10.5px;height:10px;background:linear-gradient(135deg,#5aa8ff 0%,#1a74e8 45%,#0b52c4 100%);border:1px solid #4b8fe0;border-radius:1px"></div>
<div style="position:absolute;left:74.60px;top:72.00px;height:14px;line-height:14px;font-size:8.45px;color:#111;white-space:nowrap;">Франкский Маларик I (род.~0295, бр., ум.~0360)</div>
<div style="position:absolute;left:66.0px;top:90.69999999999999px;width:7.300000000000011px;height:1px;background:#c6c6c6"></div>
<div style="position:absolute;left:75.50px;top:84.00px;height:14px;line-height:14px;font-size:8.45px;color:#111;white-space:nowrap;">супруга ... (род.?)</div>
<div style="position:absolute;left:66.0px;top:102.69999999999999px;width:8.800000000000011px;height:1px;background:#c6c6c6"></div>
<div style="position:absolute;left:74.80000000000001px;top:97.69999999999999px;width:10.5px;height:10px;background:linear-gradient(135deg,#5aa8ff 0%,#1a74e8 45%,#0b52c4 100%);border:1px solid #4b8fe0;border-radius:1px"></div>
<div style="position:absolute;left:88.90px;top:96.00px;height:14px;line-height:14px;font-size:8.45px;color:#111;white-space:nowrap;">Франкский Меллобад (род.0320, ум.0376)</div>
<div style="position:absolute;left:62.0px;top:110.19999999999999px;width:9px;height:9px;background:#fff"></div>
<svg style="position:absolute;left:63.00px;top:112.40px" width="7" height="4.5"><path d="M0.7 0.7 L3.5 3.5 L6.3 0.7" fill="none" stroke="#222" stroke-width="1.5"/></svg>
<div style="position:absolute;left:72.30000000000001px;top:114.69999999999999px;width:1px;height:1px;background:#999"></div>
<div style="position:absolute;left:74.80000000000001px;top:109.69999999999999px;width:10.5px;height:10px;background:linear-gradient(135deg,#5aa8ff 0%,#1a74e8 45%,#0b52c4 100%);border:1px solid #4b8fe0;border-radius:1px"></div>
<div style="position:absolute;left:88.90px;top:108.00px;height:14px;line-height:14px;font-size:8.45px;color:#111;white-space:nowrap;">Франкский Приарий (род.~0324, бр., ум.0396)</div>
<div style="position:absolute;left:80.30000000000001px;top:126.69999999999999px;width:7.300000000000011px;height:1px;background:#c6c6c6"></div>
<div style="position:absolute;left:89.80px;top:120.00px;height:14px;line-height:14px;font-size:8.45px;color:#111;white-space:nowrap;">супруга ... (род.?)</div>
<div style="position:absolute;left:76.30000000000001px;top:134.2px;width:9px;height:9px;background:#fff"></div>
<svg style="position:absolute;left:77.30px;top:136.40px" width="7" height="4.5"><path d="M0.7 0.7 L3.5 3.5 L6.3 0.7" fill="none" stroke="#222" stroke-width="1.5"/></svg>
<div style="position:absolute;left:86.60000000000002px;top:138.7px;width:1px;height:1px;background:#999"></div>
<div style="position:absolute;left:89.10000000000002px;top:133.7px;width:10.5px;height:10px;background:linear-gradient(135deg,#5aa8ff 0%,#1a74e8 45%,#0b52c4 100%);border:1px solid #4b8fe0;border-radius:1px"></div>
<div style="position:absolute;left:103.20px;top:132.00px;height:14px;line-height:14px;font-size:8.45px;color:#111;white-space:nowrap;">Франкский Сунно (род.0358, бр., ум.0401)</div>
<div style="position:absolute;left:94.60000000000002px;top:150.7px;width:7.300000000000011px;height:1px;background:#c6c6c6"></div>
<div style="position:absolute;left:104.10px;top:144.00px;height:14px;line-height:14px;font-size:8.45px;color:#111;white-space:nowrap;">супруга Тюрингская (Тюрингская) Мероуна (род.~0340, бр.)</div>
<div style="position:absolute;left:90.60000000000002px;top:158.2px;width:9px;height:9px;background:#fff"></div>
<svg style="position:absolute;left:91.60px;top:160.40px" width="7" height="4.5"><path d="M0.7 0.7 L3.5 3.5 L6.3 0.7" fill="none" stroke="#222" stroke-width="1.5"/></svg>
<div style="position:absolute;left:100.90000000000003px;top:162.7px;width:1px;height:1px;background:#999"></div>
<div style="position:absolute;left:103.40000000000003px;top:157.7px;width:10.5px;height:10px;background:linear-gradient(135deg,#5aa8ff 0%,#1a74e8 45%,#0b52c4 100%);border:1px solid #4b8fe0;border-radius:1px"></div>
<div style="position:absolute;left:117.50px;top:156.00px;height:14px;line-height:14px;font-size:8.45px;color:#111;white-space:nowrap;">Франкский Меровей I (род.~0390, бр., ум.0445)</div>
<div style="position:absolute;left:108.90000000000003px;top:174.7px;width:7.300000000000011px;height:1px;background:#c6c6c6"></div>
<div style="position:absolute;left:118.40px;top:168.00px;height:14px;line-height:14px;font-size:8.45px;color:#111;white-space:nowrap;">супруга Хатильда (род.?, бр.)</div>
<div style="position:absolute;left:104.90000000000003px;top:182.2px;width:9px;height:9px;background:#fff"></div>
<svg style="position:absolute;left:105.90px;top:184.40px" width="7" height="4.5"><path d="M0.7 0.7 L3.5 3.5 L6.3 0.7" fill="none" stroke="#222" stroke-width="1.5"/></svg>
<div style="position:absolute;left:115.20000000000005px;top:186.7px;width:1px;height:1px;background:#999"></div>
<div style="position:absolute;left:117.70000000000005px;top:181.7px;width:10.5px;height:10px;background:linear-gradient(135deg,#5aa8ff 0%,#1a74e8 45%,#0b52c4 100%);border:1px solid #4b8fe0;border-radius:1px"></div>
<div style="position:absolute;left:131.80px;top:180.00px;height:14px;line-height:14px;font-size:8.45px;color:#111;white-space:nowrap;">Франкский Меровей II Юный (род.П.415, бр., ум.0457)</div>
<div style="position:absolute;left:123.20000000000005px;top:198.7px;width:7.2999999999999545px;height:1px;background:#c6c6c6"></div>
<div style="position:absolute;left:132.70px;top:192.00px;height:14px;line-height:14px;font-size:8.45px;color:#111;white-space:nowrap;">супруга Хлодесвинта (род.?, бр.)</div>
<div style="position:absolute;left:123.20000000000005px;top:210.7px;width:8.799999999999955px;height:1px;background:#c6c6c6"></div>
<div style="position:absolute;left:131.7px;top:205.2px;width:11px;height:11px;border-radius:50%;background:radial-gradient(circle at 35% 30%,#ffc8a0 0%,#f77a40 45%,#d9481a 100%)"></div>
<div style="position:absolute;left:146.10px;top:204.00px;height:14px;line-height:14px;font-size:8.45px;color:#111;white-space:nowrap;">Франкская (Франкская) Верика (род.?)</div>
<div style="position:absolute;left:119.20000000000005px;top:218.2px;width:9px;height:9px;background:#fff"></div>
<svg style="position:absolute;left:120.20px;top:220.40px" width="7" height="4.5"><path d="M0.7 0.7 L3.5 3.5 L6.3 0.7" fill="none" stroke="#222" stroke-width="1.5"/></svg>
<div style="position:absolute;left:129.5px;top:222.7px;width:1px;height:1px;background:#999"></div>
<div style="position:absolute;left:132.0px;top:217.7px;width:10.5px;height:10px;background:linear-gradient(135deg,#5aa8ff 0%,#1a74e8 45%,#0b52c4 100%);border:1px solid #4b8fe0;border-radius:1px"></div>
<div style="position:absolute;left:146.10px;top:216.00px;height:14px;line-height:14px;font-size:8.45px;color:#111;white-space:nowrap;">Франкский Хильдерик I (род.0435, бр., ум.0481/0482)</div>
<div style="position:absolute;left:137.5px;top:234.7px;width:7.300000000000068px;height:1px;background:#c6c6c6"></div>
<div style="position:absolute;left:147.00px;top:228.00px;height:14px;line-height:14px;font-size:8.45px;color:#111;white-space:nowrap;">супруга Тюрингская (Тюрингская) Базина (род.~0440, бр., ум.0491)</div>
<div style="position:absolute;left:137.5px;top:246.7px;width:8.800000000000068px;height:1px;background:#c6c6c6"></div>
<div style="position:absolute;left:146.00000000000006px;top:241.2px;width:11px;height:11px;border-radius:50%;background:radial-gradient(circle at 35% 30%,#ffc8a0 0%,#f77a40 45%,#d9481a 100%)"></div>
<div style="position:absolute;left:160.40px;top:240.00px;height:14px;line-height:14px;font-size:8.45px;color:#111;white-space:nowrap;">Франкская (Франкская) Лантехильда (род.?)</div>
<div style="position:absolute;left:133.5px;top:254.2px;width:9px;height:9px;background:#fff"></div>
<svg style="position:absolute;left:134.50px;top:256.40px" width="7" height="4.5"><path d="M0.7 0.7 L3.5 3.5 L6.3 0.7" fill="none" stroke="#222" stroke-width="1.5"/></svg>
<div style="position:absolute;left:143.80000000000007px;top:258.7px;width:1px;height:1px;background:#999"></div>
<div style="position:absolute;left:146.30000000000007px;top:253.7px;width:10.5px;height:10px;background:linear-gradient(135deg,#5aa8ff 0%,#1a74e8 45%,#0b52c4 100%);border:1px solid #4b8fe0;border-radius:1px"></div>
<div style="position:absolute;left:160.40px;top:252.00px;height:14px;line-height:14px;font-size:8.45px;color:#111;white-space:nowrap;">Франкский ? (род.?, бр.)</div>
<div style="position:absolute;left:151.80000000000007px;top:270.7px;width:7.2999999999999545px;height:1px;background:#c6c6c6"></div>
<div style="position:absolute;left:161.30px;top:264.00px;height:14px;line-height:14px;font-size:8.45px;color:#111;white-space:nowrap;">супруга ... (род.?)</div>
<div style="position:absolute;left:151.80000000000007px;top:282.7px;width:8.799999999999955px;height:1px;background:#c6c6c6"></div>
<div style="position:absolute;left:160.60000000000002px;top:277.7px;width:10.5px;height:10px;background:linear-gradient(135deg,#5aa8ff 0%,#1a74e8 45%,#0b52c4 100%);border:1px solid #4b8fe0;border-radius:1px"></div>
<div style="position:absolute;left:174.70px;top:276.00px;height:14px;line-height:14px;font-size:8.45px;color:#111;white-space:nowrap;">Анжерский Люсиниус Святой (род.~0540, ум.~0618)</div>
<div style="position:absolute;left:133.5px;top:290.2px;width:9px;height:9px;background:#fff"></div>
<svg style="position:absolute;left:134.50px;top:292.40px" width="7" height="4.5"><path d="M0.7 0.7 L3.5 3.5 L6.3 0.7" fill="none" stroke="#222" stroke-width="1.5"/></svg>
<div style="position:absolute;left:143.80000000000007px;top:294.7px;width:1px;height:1px;background:#999"></div>
<div style="position:absolute;left:146.00000000000006px;top:289.2px;width:11px;height:11px;border-radius:50%;background:radial-gradient(circle at 35% 30%,#ffc8a0 0%,#f77a40 45%,#d9481a 100%)"></div>
<div style="position:absolute;left:160.40px;top:288.00px;height:14px;line-height:14px;font-size:8.45px;color:#111;white-space:nowrap;">Франкская (Франкская) Адолфледа (род.~0456, бр., ум.0526)</div>
<div style="position:absolute;left:151.80000000000007px;top:306.7px;width:7.2999999999999545px;height:1px;background:#c6c6c6"></div>
<div style="position:absolute;left:161.30px;top:300.00px;height:14px;line-height:14px;font-size:8.45px;color:#111;white-space:nowrap;">супруг Остготский Теодорих Великий (род.0454, бр., ум.0526)</div>
<div style="position:absolute;left:151.80000000000007px;top:318.7px;width:8.799999999999955px;height:1px;background:#c6c6c6"></div>
<div style="position:absolute;left:160.60000000000002px;top:313.7px;width:11px;height:10.5px;background:linear-gradient(135deg,#f06a40,#c8300c);border-radius:1px"></div>
<svg style="position:absolute;left:162.10px;top:315.20px" width="8" height="7"><path d="M0.8 0.8 L3.5 3.5 L0.8 6.2 M4 0.8 L6.7 3.5 L4 6.2" fill="none" stroke="#fff" stroke-width="1.3"/></svg>
<div style="position:absolute;left:174.70px;top:312.00px;height:14px;line-height:14px;font-size:8.45px;color:#111;white-space:nowrap;text-decoration:underline;">Остготская (Остготская) ? (род.?, бр.)</div>
<div style="position:absolute;left:147.80000000000007px;top:326.2px;width:9px;height:9px;background:#fff"></div>
<svg style="position:absolute;left:148.80px;top:328.40px" width="7" height="4.5"><path d="M0.7 0.7 L3.5 3.5 L6.3 0.7" fill="none" stroke="#222" stroke-width="1.5"/></svg>
<div style="position:absolute;left:158.10000000000002px;top:330.7px;width:1px;height:1px;background:#999"></div>
<div style="position:absolute;left:160.3px;top:325.2px;width:11px;height:11px;border-radius:50%;background:radial-gradient(circle at 35% 30%,#ffc8a0 0%,#f77a40 45%,#d9481a 100%)"></div>
<div style="position:absolute;left:174.70px;top:324.00px;height:14px;line-height:14px;font-size:8.45px;color:#111;white-space:nowrap;">Остготская (Остготская) ? (род.?, бр.)</div>
<div style="position:absolute;left:166.10000000000002px;top:342.7px;width:7.300000000000068px;height:1px;background:#c6c6c6"></div>
<div style="position:absolute;left:175.60px;top:336.00px;height:14px;line-height:14px;font-size:8.45px;color:#111;white-space:nowrap;">супруг Бургундский Сигизмунд II (род.?, 1бр., 2бр., ум.0524)</div>
<div style="position:absolute;left:166.10000000000002px;top:354.7px;width:8.800000000000068px;height:1px;background:#c6c6c6"></div>
<div style="position:absolute;left:174.9000000000001px;top:349.7px;width:10.5px;height:10px;background:linear-gradient(135deg,#5aa8ff 0%,#1a74e8 45%,#0b52c4 100%);border:1px solid #4b8fe0;border-radius:1px"></div>
<div style="position:absolute;left:189.00px;top:348.00px;height:14px;line-height:14px;font-size:8.45px;color:#111;white-space:nowrap;">Бургундский Сигрих (род.?, ум.0522)</div>
<div style="position:absolute;left:162.10000000000002px;top:362.2px;width:9px;height:9px;background:#fff"></div>
<svg style="position:absolute;left:163.10px;top:364.40px" width="7" height="4.5"><path d="M0.7 0.7 L3.5 3.5 L6.3 0.7" fill="none" stroke="#222" stroke-width="1.5"/></svg>
<div style="position:absolute;left:172.4000000000001px;top:366.7px;width:1px;height:1px;background:#999"></div>
<div style="position:absolute;left:174.60000000000014px;top:361.2px;width:11px;height:11px;border-radius:50%;background:radial-gradient(circle at 35% 30%,#ffc8a0 0%,#f77a40 45%,#d9481a 100%)"></div>
<div style="position:absolute;left:189.00px;top:360.00px;height:14px;line-height:14px;font-size:8.45px;color:#111;white-space:nowrap;">Бургундская (Бургундская) Свавеготта (род.~0500, бр.0522)</div>
<div style="position:absolute;left:180.4000000000001px;top:378.7px;width:7.2999999999999545px;height:1px;background:#c6c6c6"></div>
<div style="position:absolute;left:189.90px;top:372.00px;height:14px;line-height:14px;font-size:8.45px;color:#111;white-space:nowrap;text-decoration:underline;">чоловік Австразийский Теодорих (Тьерри) I (род.~0486, 1бр., 2бр.0522, ум.0533)</div>
<div style="position:absolute;left:180.4000000000001px;top:390.7px;width:8.799999999999955px;height:1px;background:#c6c6c6"></div>
<div style="position:absolute;left:189.20000000000005px;top:385.7px;width:11px;height:10.5px;background:linear-gradient(135deg,#3a8cf0,#0c58c8);border-radius:1px"></div>
<svg style="position:absolute;left:190.70px;top:387.20px" width="8" height="7"><path d="M0.8 0.8 L3.5 3.5 L0.8 6.2 M4 0.8 L6.7 3.5 L4 6.2" fill="none" stroke="#fff" stroke-width="1.3"/></svg>
<div style="position:absolute;left:203.30px;top:384.00px;height:14px;line-height:14px;font-size:8.45px;color:#111;white-space:nowrap;text-decoration:underline;">Австразийский Гонтье (род.П.524)</div>
<div style="position:absolute;left:180.4000000000001px;top:402.7px;width:8.799999999999955px;height:1px;background:#c6c6c6"></div>
<div style="position:absolute;left:189.20000000000005px;top:397.7px;width:11px;height:10.5px;background:linear-gradient(135deg,#3a8cf0,#0c58c8);border-radius:1px"></div>
<svg style="position:absolute;left:190.70px;top:399.20px" width="8" height="7"><path d="M0.8 0.8 L3.5 3.5 L0.8 6.2 M4 0.8 L6.7 3.5 L4 6.2" fill="none" stroke="#fff" stroke-width="1.3"/></svg>
<div style="position:absolute;left:203.30px;top:396.00px;height:14px;line-height:14px;font-size:8.45px;color:#111;white-space:nowrap;text-decoration:underline;">Австразийский Меровей (род.?, бр.)</div>
<div style="position:absolute;left:180.4000000000001px;top:414.7px;width:8.799999999999955px;height:1px;background:#c6c6c6"></div>
<div style="position:absolute;left:189.20000000000005px;top:409.7px;width:11px;height:10.5px;background:linear-gradient(135deg,#f06a40,#c8300c);border-radius:1px"></div>
<svg style="position:absolute;left:190.70px;top:411.20px" width="8" height="7"><path d="M0.8 0.8 L3.5 3.5 L0.8 6.2 M4 0.8 L6.7 3.5 L4 6.2" fill="none" stroke="#fff" stroke-width="1.3"/></svg>
<div style="position:absolute;left:203.30px;top:408.00px;height:14px;line-height:14px;font-size:8.45px;color:#111;white-space:nowrap;text-decoration:underline;">Австразийская (Австразийская) Теодехильда (род.0523, 1бр., 2бр., ум.0563)</div>
</div>
<div style="position:absolute;left:858.5px;top:127.4px;width:91px;height:1px;background:#fff"></div>
<div style="position:absolute;left:858.5px;top:127.4px;width:1px;height:434px;background:#fff"></div>
<div style="position:absolute;left:949.2px;top:127.4px;width:1px;height:434px;background:#a0a0a0"></div>
<div style="position:absolute;left:858.5px;top:560.8px;width:91.7px;height:1px;background:#a0a0a0"></div>
<div style="position:absolute;left:950.2px;top:127px;width:3.5px;height:435px;background:#fbfbfb"></div>
<div style="position:absolute;left:939px;top:120px;width:14px;height:5px;"></div>
<div style="position:absolute;left:860.5px;top:129.5px;width:88px;height:65px;border:1px solid #dcdcdc;border-right-color:#fff;border-bottom-color:#fff"></div>
<div style="position:absolute;left:864px;top:127.80px;height:14px;line-height:14px;font-size:8.0px;color:#1a1a42;font-weight:400;white-space:nowrap;background:#f0f0f0;padding:0 1px">Позначення:</div>
<div style="position:absolute;left:864.2px;top:142.80px;height:14px;line-height:14px;font-size:8.0px;color:#1a1a42;font-weight:400;white-space:nowrap;">Народж.</div>
<div style="position:absolute;left:901px;top:141px;width:36.8px;height:15.599999999999994px;background:#fff;border:1px solid #7a7a7a;border-right-color:#c8c8c8;border-bottom-color:#c8c8c8"></div>
<div style="position:absolute;left:904.5px;top:141.80px;height:14px;line-height:14px;font-size:8.0px;color:#000;font-weight:400;white-space:nowrap;">род.</div>
<div style="position:absolute;left:864.2px;top:160.80px;height:14px;line-height:14px;font-size:8.0px;color:#1a1a42;font-weight:400;white-space:nowrap;">Шлюб</div>
<div style="position:absolute;left:901px;top:159.4px;width:36.8px;height:14.799999999999983px;background:#fff;border:1px solid #7a7a7a;border-right-color:#c8c8c8;border-bottom-color:#c8c8c8"></div>
<div style="position:absolute;left:904.5px;top:159.80px;height:14px;line-height:14px;font-size:8.0px;color:#000;font-weight:400;white-space:nowrap;">бр.</div>
<div style="position:absolute;left:864.2px;top:179.00px;height:14px;line-height:14px;font-size:8.0px;color:#1a1a42;font-weight:400;white-space:nowrap;">Смерть</div>
<div style="position:absolute;left:901px;top:177.5px;width:36.8px;height:15.0px;background:#fff;border:1px solid #7a7a7a;border-right-color:#c8c8c8;border-bottom-color:#c8c8c8"></div>
<div style="position:absolute;left:904.5px;top:178.00px;height:14px;line-height:14px;font-size:8.0px;color:#000;font-weight:400;white-space:nowrap;">ум.</div>
<div style="position:absolute;left:860.5px;top:196.5px;width:88px;height:58.5px;border:1px solid #dcdcdc;border-right-color:#fff;border-bottom-color:#fff"></div>
<div style="position:absolute;left:864px;top:193.20px;height:14px;line-height:14px;font-size:8.0px;color:#1a1a42;font-weight:400;white-space:nowrap;background:#f0f0f0;padding:0 1px">Заповнювати</div>
<div style="position:absolute;left:864px;top:207.9px;width:10px;height:10px;background:#fff;border:1px solid #333"></div>
<div style="position:absolute;left:876.2px;top:205.90px;height:14px;line-height:14px;font-size:8.0px;color:#1a1a42;font-weight:400;white-space:nowrap;">Місце події</div>
<div style="position:absolute;left:864px;top:220.2px;width:10px;height:10px;background:#fff;border:1px solid #333"></div>
<div style="position:absolute;left:876.2px;top:218.20px;height:14px;line-height:14px;font-size:8.0px;color:#1a1a42;font-weight:400;white-space:nowrap;">Прим.до персони</div>
<div style="position:absolute;left:864px;top:232.2px;width:10px;height:10px;background:#fff;border:1px solid #333"></div>
<div style="position:absolute;left:876.2px;top:230.20px;height:14px;line-height:14px;font-size:8.0px;color:#1a1a42;font-weight:400;white-space:nowrap;">Прим.до події</div>
<div style="position:absolute;left:864px;top:244px;width:10px;height:10px;background:#fff;border:1px solid #333"></div>
<div style="position:absolute;left:876.2px;top:242.00px;height:14px;line-height:14px;font-size:8.0px;color:#1a1a42;font-weight:400;white-space:nowrap;">Причина смерті</div>
<div style="position:absolute;left:860.5px;top:255px;width:88px;height:67px;border:1px solid #dcdcdc;border-right-color:#fff;border-bottom-color:#fff"></div>
<div style="position:absolute;left:864px;top:255.20px;height:14px;line-height:14px;font-size:8.0px;color:#1a1a42;font-weight:400;white-space:nowrap;background:#f0f0f0;padding:0 1px">Нумерація персон</div>
<svg style="position:absolute;left:864.5px;top:268.7px" width="11" height="11" viewBox="0 0 11 11"><circle cx="5.5" cy="5.5" r="4.8" fill="#fff" stroke="#333" stroke-width="1"/><circle cx="5.5" cy="5.5" r="2.6" fill="#222"/></svg>
<div style="position:absolute;left:876.8px;top:267.20px;height:14px;line-height:14px;font-size:8.0px;color:#1a1a42;font-weight:400;white-space:nowrap;">Без номерів</div>
<svg style="position:absolute;left:864.5px;top:281.8px" width="11" height="11" viewBox="0 0 11 11"><circle cx="5.5" cy="5.5" r="4.8" fill="#fff" stroke="#333" stroke-width="1"/></svg>
<div style="position:absolute;left:876.8px;top:280.30px;height:14px;line-height:14px;font-size:8.0px;color:#1a1a42;font-weight:400;white-space:nowrap;">Послідовний</div>
<svg style="position:absolute;left:864.5px;top:295.5px" width="11" height="11" viewBox="0 0 11 11"><circle cx="5.5" cy="5.5" r="4.8" fill="#fff" stroke="#333" stroke-width="1"/></svg>
<div style="position:absolute;left:876.8px;top:294.00px;height:14px;line-height:14px;font-size:8.0px;color:#1a1a42;font-weight:400;white-space:nowrap;">д&#x27;Абовилля</div>
<svg style="position:absolute;left:864.5px;top:308.9px" width="11" height="11" viewBox="0 0 11 11"><circle cx="5.5" cy="5.5" r="4.8" fill="#fff" stroke="#333" stroke-width="1"/></svg>
<div style="position:absolute;left:876.8px;top:307.40px;height:14px;line-height:14px;font-size:8.0px;color:#1a1a42;font-weight:400;white-space:nowrap;">Коновалова</div>
<div style="position:absolute;left:860.5px;top:322.5px;width:88px;height:62px;border:1px solid #dcdcdc;border-right-color:#fff;border-bottom-color:#fff"></div>
<div style="position:absolute;left:864px;top:322.80px;height:14px;line-height:14px;font-size:8.0px;color:#1a1a42;font-weight:400;white-space:nowrap;background:#f0f0f0;padding:0 1px">Фільтр</div>
<svg style="position:absolute;left:864.5px;top:335.3px" width="11" height="11" viewBox="0 0 11 11"><circle cx="5.5" cy="5.5" r="4.8" fill="#fff" stroke="#333" stroke-width="1"/><circle cx="5.5" cy="5.5" r="2.6" fill="#222"/></svg>
<div style="position:absolute;left:876.8px;top:333.80px;height:14px;line-height:14px;font-size:8.0px;color:#1a1a42;font-weight:400;white-space:nowrap;">Всі</div>
<svg style="position:absolute;left:864.5px;top:347.0px" width="11" height="11" viewBox="0 0 11 11"><circle cx="5.5" cy="5.5" r="4.8" fill="#fff" stroke="#333" stroke-width="1"/></svg>
<div style="position:absolute;left:876.8px;top:345.50px;height:14px;line-height:14px;font-size:8.0px;color:#1a1a42;font-weight:400;white-space:nowrap;">Рід</div>
<svg style="position:absolute;left:864.5px;top:359.2px" width="11" height="11" viewBox="0 0 11 11"><circle cx="5.5" cy="5.5" r="4.8" fill="#fff" stroke="#333" stroke-width="1"/></svg>
<div style="position:absolute;left:876.8px;top:357.70px;height:14px;line-height:14px;font-size:8.0px;color:#1a1a42;font-weight:400;white-space:nowrap;">Чоловіки</div>
<svg style="position:absolute;left:864.5px;top:370.8px" width="11" height="11" viewBox="0 0 11 11"><circle cx="5.5" cy="5.5" r="4.8" fill="#fff" stroke="#333" stroke-width="1"/></svg>
<div style="position:absolute;left:876.8px;top:369.30px;height:14px;line-height:14px;font-size:8.0px;color:#1a1a42;font-weight:400;white-space:nowrap;">Жінки</div>
<div style="position:absolute;left:872px;top:484px;width:65px;height:14.800000000000011px;background:#e1e1e1;border:1px solid #adadad"></div>
<div style="position:absolute;left:872px;top:485.60px;height:14px;line-height:14px;font-size:8.45px;color:#000;font-weight:400;white-space:nowrap;width:65px;text-align:center">Створити</div>
<div style="position:absolute;left:872px;top:503.2px;width:65px;height:15.199999999999989px;background:#e1e1e1;border:1px solid #adadad"></div>
<div style="position:absolute;left:872px;top:505.00px;height:14px;line-height:14px;font-size:8.45px;color:#000;font-weight:400;white-space:nowrap;width:65px;text-align:center">Розгорнути</div>
<div style="position:absolute;left:872px;top:522.9px;width:65px;height:14.899999999999977px;background:#e1e1e1;border:1px solid #adadad"></div>
<div style="position:absolute;left:872px;top:524.55px;height:14px;line-height:14px;font-size:8.45px;color:#000;font-weight:400;white-space:nowrap;width:65px;text-align:center">Друкувати</div>
<div style="position:absolute;left:872px;top:543.9px;width:65px;height:14.700000000000045px;background:#e1e1e1;border:1px solid #adadad"></div>
<div style="position:absolute;left:872px;top:545.45px;height:14px;line-height:14px;font-size:8.45px;color:#000;font-weight:400;white-space:nowrap;width:54px;text-align:center">Записати</div>
<div style="position:absolute;left:926.5px;top:546.4px;width:1.2px;height:9.700000000000045px;background:#555"></div>
<svg style="position:absolute;left:929px;top:549px" width="7" height="4" viewBox="0 0 7 4"><path d="M0 0 H7 L3.5 4 Z" fill="#000"/></svg>
<div style="position:absolute;left:650.5px;top:365px;width:222px;height:15px;background:rgba(0,0,0,0.18);filter:blur(1px)"></div>
<div style="position:absolute;left:649px;top:363.4px;width:221.2px;height:14.6px;background:#fff;border:1px solid #767676"></div>
<div style="position:absolute;left:653px;top:363.80px;height:14px;line-height:14px;font-size:8.75px;color:#111;font-weight:400;white-space:nowrap;">Франкский Хильдерик I (род.0435, бр., ум.0481/0482)</div>
<div style="position:absolute;left:0px;top:0px;width:956px;height:1px;background:#4f7390"></div>
<div style="position:absolute;left:0px;top:0px;width:1px;height:568px;background:#3f7d98"></div>
<div style="position:absolute;left:955px;top:0px;width:1px;height:568px;background:#1e3554"></div>
<div style="position:absolute;left:0px;top:567px;width:956px;height:1px;background:#1e3554"></div>
</body></html>
